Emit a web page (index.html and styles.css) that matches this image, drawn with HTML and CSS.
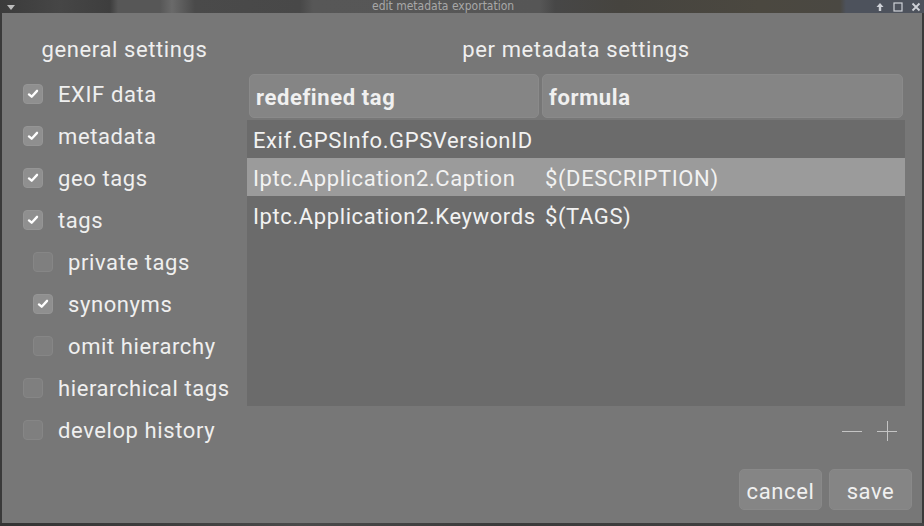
FILE: index.html
```html
<!DOCTYPE html>
<html>
<head>
<meta charset="utf-8">
<link rel="stylesheet" href="styles.css">
</head>
<body>
<div class="titlebar">
  <span class="tb-arrow"></span>
  <span class="tb-title">edit metadata exportation</span>
  <div class="tb-controls">
    <svg width="10" height="10" viewBox="0 0 10 10"><path d="M5 1 L1.5 5 H3.8 V9 H6.2 V5 H8.5 Z" fill="#cfd2d8"/></svg>
    <svg width="10" height="10" viewBox="0 0 10 10"><rect x="1" y="1" width="8" height="8" fill="none" stroke="#cfd2d8" stroke-width="1.2"/></svg>
    <svg width="10" height="10" viewBox="0 0 10 10"><path d="M1.5 1.5 L8.5 8.5 M8.5 1.5 L1.5 8.5" stroke="#cfd2d8" stroke-width="1.8"/></svg>
  </div>
</div>
<div class="dialog">
  <div class="content">
    <div class="left">
      <div class="heading">general settings</div>
      <div class="checks">
        <div class="row"><span class="box on"><svg viewBox="0 0 20 20"><path d="M5.5 10.5 L8.5 13 L14.5 6.5" fill="none" stroke="#fff" stroke-width="2.6" stroke-linecap="round" stroke-linejoin="round"/></svg></span><span class="lbl">EXIF data</span></div>
        <div class="row"><span class="box on"><svg viewBox="0 0 20 20"><path d="M5.5 10.5 L8.5 13 L14.5 6.5" fill="none" stroke="#fff" stroke-width="2.6" stroke-linecap="round" stroke-linejoin="round"/></svg></span><span class="lbl">metadata</span></div>
        <div class="row"><span class="box on"><svg viewBox="0 0 20 20"><path d="M5.5 10.5 L8.5 13 L14.5 6.5" fill="none" stroke="#fff" stroke-width="2.6" stroke-linecap="round" stroke-linejoin="round"/></svg></span><span class="lbl">geo tags</span></div>
        <div class="row"><span class="box on"><svg viewBox="0 0 20 20"><path d="M5.5 10.5 L8.5 13 L14.5 6.5" fill="none" stroke="#fff" stroke-width="2.6" stroke-linecap="round" stroke-linejoin="round"/></svg></span><span class="lbl">tags</span></div>
        <div class="row sub"><span class="box"></span><span class="lbl">private tags</span></div>
        <div class="row sub"><span class="box on"><svg viewBox="0 0 20 20"><path d="M5.5 10.5 L8.5 13 L14.5 6.5" fill="none" stroke="#fff" stroke-width="2.6" stroke-linecap="round" stroke-linejoin="round"/></svg></span><span class="lbl">synonyms</span></div>
        <div class="row sub"><span class="box"></span><span class="lbl">omit hierarchy</span></div>
        <div class="row"><span class="box"></span><span class="lbl">hierarchical tags</span></div>
        <div class="row"><span class="box"></span><span class="lbl">develop history</span></div>
      </div>
    </div>
    <div class="right">
      <div class="heading">per metadata settings</div>
      <div class="thead">
        <div class="th c1">redefined tag</div>
        <div class="th c2">formula</div>
      </div>
      <div class="tbody">
        <div class="tr"><span class="td c1">Exif.GPSInfo.GPSVersionID</span><span class="td c2"></span></div>
        <div class="tr sel"><span class="td c1">Iptc.Application2.Caption</span><span class="td c2">$(DESCRIPTION)</span></div>
        <div class="tr"><span class="td c1">Iptc.Application2.Keywords</span><span class="td c2">$(TAGS)</span></div>
      </div>
      <div class="tools">
        <svg width="20" height="20" viewBox="0 0 20 20"><path d="M0 10.5 H20" stroke="#c4c4c4" stroke-width="1"/></svg>
        <svg width="20" height="20" viewBox="0 0 20 20"><path d="M0 10.5 H20 M10.5 0 V20" stroke="#c4c4c4" stroke-width="1"/></svg>
      </div>
    </div>
  </div>
  <div class="buttons">
    <button class="btn">cancel</button>
    <button class="btn">save</button>
  </div>
</div>
<div class="bottomstrip"></div>
</body>
</html>
```
FILE: styles.css
```css
html, body {
  margin: 0;
  padding: 0;
}
body {
  width: 924px;
  height: 526px;
  overflow: hidden;
  background: #3a3a3a;
  font-family: Roboto, "Liberation Sans", sans-serif;
  color: #eeeeee;
}
.titlebar {
  height: 13px;
  display: flex;
  align-items: center;
  position: relative;
  background: linear-gradient(90deg,
    #3b3b3b 0px, #464646 60px, #3e3e3e 110px, #575757 118px, #575757 160px,
    #6a6a6a 172px, #4a4a4a 195px, #484848 300px, #575757 313px,
    #565656 540px, #474747 555px, #46443f 620px, #4b4840 760px, #4a4842 840px,
    #4d525c 846px, #4d525c 924px);
}
.tb-arrow {
  width: 0;
  height: 0;
  margin-left: 7px;
  margin-top: 1px;
  border-left: 4px solid transparent;
  border-right: 4px solid transparent;
  border-top: 5px solid #bdbdbd;
}
.tb-title {
  position: absolute;
  left: 372px;
  top: -1px;
  font-size: 12px;
  line-height: 14px;
  color: #a8a8a8;
  font-family: "DejaVu Sans Condensed", "DejaVu Sans", sans-serif;
  font-stretch: condensed;
}
.tb-controls {
  margin-left: auto;
  margin-right: 3px;
  display: flex;
  gap: 8px;
  align-items: center;
}
.tb-controls svg {
  display: block;
}
.dialog {
  margin-left: 2px;
  width: 920px;
  height: 510px;
  background: #777777;
  display: flex;
  flex-direction: column;
}
.content {
  display: flex;
  padding-top: 24px;
}
.heading {
  font-size: 22px;
  letter-spacing: 0.6px;
  line-height: 24px;
  padding-top: 1px;
  text-align: center;
  color: #efefef;
}
.left {
  width: 245px;
}
.checks {
  margin-top: 11px;
  display: flex;
  flex-direction: column;
}
.row {
  height: 42px;
  display: flex;
  align-items: center;
  padding-left: 21px;
}
.row.sub {
  padding-left: 31px;
}
.box {
  width: 20px;
  height: 20px;
  box-sizing: border-box;
  border-radius: 4px;
  background: #7f7f7f;
  border: 1px solid #868686;
  flex: none;
  display: flex;
}
.box.on {
  background: #8f8f8f;
  border-color: #959595;
}
.box svg {
  width: 18px;
  height: 18px;
}
.lbl {
  margin-left: 15px;
  font-size: 22px;
  letter-spacing: 0.6px;
  line-height: 24px;
  padding-top: 2px;
  color: #efefef;
}
.right {
  width: 658px;
  display: flex;
  flex-direction: column;
}
.thead {
  margin-top: 12px;
  display: flex;
  gap: 3px;
  padding: 0 2px;
  height: 44px;
}
.th {
  box-sizing: border-box;
  background: #858585;
  border: 1px solid #8a8a8a;
  border-radius: 5px;
  font-weight: bold;
  font-size: 22px;
  letter-spacing: 0.6px;
  display: flex;
  align-items: center;
  padding-left: 6px;
  padding-top: 2px;
  color: #f0f0f0;
}
.th.c1 {
  width: 290px;
}
.th.c2 {
  flex: 1;
}
.tbody {
  margin-top: 2px;
  height: 286px;
  background: #6b6b6b;
}
.tr {
  height: 38px;
  box-sizing: border-box;
  padding-top: 3px;
  display: flex;
  align-items: center;
  font-size: 22px;
  letter-spacing: 0.6px;
  color: #f2f2f2;
}
.tr.sel {
  background: #9b9b9b;
}
.td.c1 {
  flex: none;
  min-width: 292px;
  padding-left: 6px;
  box-sizing: border-box;
  white-space: nowrap;
}
.td.c2 {
  padding-left: 6px;
  white-space: nowrap;
}
.tools {
  display: flex;
  justify-content: flex-end;
  gap: 15px;
  padding-right: 8px;
  margin-top: 15px;
}
.tools svg {
  display: block;
}
.buttons {
  margin-top: auto;
  margin-bottom: 13px;
  display: flex;
  justify-content: flex-end;
  gap: 7px;
  padding-right: 10px;
}
.btn {
  width: 83px;
  height: 41px;
  background: #858585;
  border: 1px solid #898989;
  border-radius: 5px;
  font-family: Roboto, "Liberation Sans", sans-serif;
  font-size: 22px;
  letter-spacing: 0.6px;
  color: #f0f0f0;
  padding: 3px 0 0 0;
}
.bottomstrip {
  height: 3px;
  background: linear-gradient(90deg, #333 0px, #3d3d3d 160px, #4a4a4a 300px, #3a3a3a 500px, #444 924px);
}
```
